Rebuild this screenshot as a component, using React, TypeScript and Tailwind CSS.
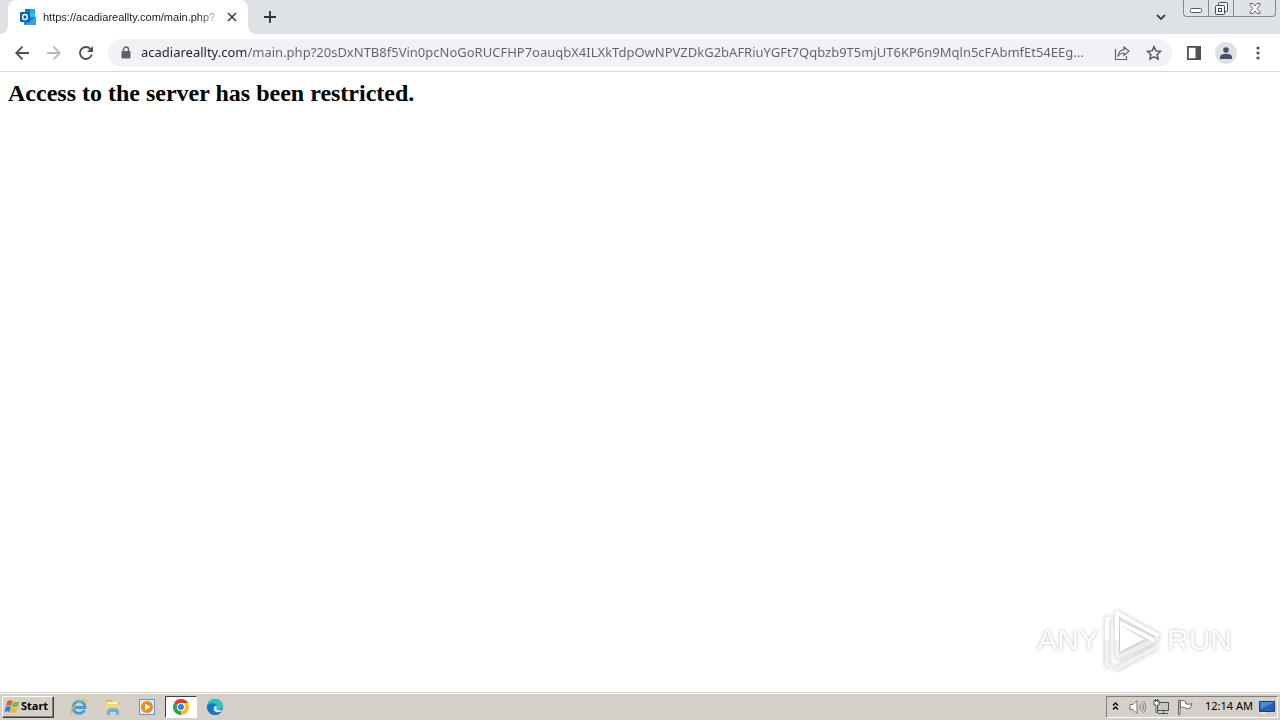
import React, { useState } from 'react';

const PAGE_URL =
  'acadiareallty.com/main.php?20sDxNTB8f5Vin0pcNoGoRUCFHP7oauqbX4ILXkTdpOwNPVZDkG2bAFRiuYGFt7Qqbzb9T5mjUT6KP6n9Mqln5cFAbmfEt54EEg...';

interface IconButtonProps {
  label: string;
  className?: string;
  children: React.ReactNode;
}

const IconButton: React.FC<IconButtonProps> = ({ label, className = '', children }) => (
  <button
    type="button"
    aria-label={label}
    className={`flex shrink-0 items-center justify-center ${className}`}
  >
    {children}
  </button>
);

const OutlookIcon = () => (
  <svg width="16" height="16" viewBox="0 0 16 16" aria-hidden="true">
    <path d="M5 0h10v8H5z" fill="#1490df" />
    <path d="M5 0h5v4H5z" fill="#0f78d4" />
    <path d="M10 0h5v4h-5z" fill="#28a8ea" />
    <path d="M10 4h5v4h-5z" fill="#3cb9ef" />
    <path d="M4 7l12 1v7a1 1 0 0 1-1 1H4z" fill="#1a8ad8" />
    <path d="M16 8v7a1 1 0 0 1-1 1H5z" fill="#28a8ea" />
    <rect x="0" y="3" width="10" height="10" rx="1" fill="#0f5fb4" />
    <ellipse cx="5" cy="8" rx="2.3" ry="2.6" fill="none" stroke="#fff" strokeWidth="1.5" />
  </svg>
);

const LockIcon = () => (
  <svg width="10" height="14" viewBox="0 0 10 14" className="shrink-0" aria-hidden="true">
    <rect x="0.5" y="5" width="9" height="7.5" rx="1" fill="#5f6368" />
    <path d="M2.5 5V3.5a2.5 2.5 0 0 1 5 0V5" fill="none" stroke="#5f6368" strokeWidth="1.4" />
  </svg>
);

const TabStrip = () => (
  <header className="flex h-[34px] shrink-0 bg-[#dee1e6]">
    <div className="w-2 bg-white">
      <div className="h-full rounded-br-lg bg-[#dee1e6]" />
    </div>
    <div className="flex w-60 items-center rounded-t-lg bg-white pl-3 pr-1.5">
      <OutlookIcon />
      <span className="ml-[7px] whitespace-nowrap font-['Liberation_Sans',sans-serif] text-[11px] text-[#202124] [mask-image:linear-gradient(90deg,#000_90%,#00000050)]">
        https://acadiareallty.com/main.php?
      </span>
      <IconButton label="Close tab" className="ml-auto size-5">
        <svg width="10" height="10" viewBox="0 0 10 10" stroke="#3c4043" strokeWidth="1.6">
          <path d="M1 1l8 8M9 1l-8 8" />
        </svg>
      </IconButton>
    </div>
    <div className="w-2 bg-white">
      <div className="h-full rounded-bl-lg bg-[#dee1e6]" />
    </div>
    <IconButton label="New tab" className="w-7">
      <svg width="12" height="12" viewBox="0 0 12 12" stroke="#303236" strokeWidth="1.8">
        <path d="M6 0v12M0 6h12" />
      </svg>
    </IconButton>
    <IconButton label="Search tabs" className="ml-auto w-6">
      <svg width="10" height="7" viewBox="0 0 10 7" fill="none" stroke="#3c4043" strokeWidth="1.8">
        <path d="M1 1l4 4 4-4" />
      </svg>
    </IconButton>
    <div className="ml-2.5 mr-1 flex h-[17px] rounded-b border border-t-0 border-[#85888d] bg-[#dfe2e7]">
      <IconButton label="Minimize" className="w-[25px] border-r border-[#85888d] pt-1">
        <svg width="12" height="5" viewBox="0 0 12 5" fill="#fff" stroke="#55585e">
          <rect x="0.5" y="0.5" width="11" height="4" rx="1" />
        </svg>
      </IconButton>
      <IconButton label="Restore" className="w-[25px] border-r border-[#85888d]">
        <svg width="13" height="13" viewBox="0 0 13 13" fill="#f4f5f7" stroke="#45484e">
          <rect x="3.5" y="0.5" width="9" height="9" rx="1" />
          <rect x="0.5" y="3.5" width="9" height="9" rx="1" />
          <rect x="3.5" y="6.5" width="3" height="3" />
        </svg>
      </IconButton>
      <IconButton label="Close window" className="w-[41px]">
        <svg width="12" height="11" viewBox="0 0 12 11" fill="#fff" stroke="#65686e">
          <path d="M1 .5h3l2 2.5L8 .5h3V2L8 5.500l3 3.500v1.500H8L6 8l-2 2.500H1V9l3-3.500L1 2z" />
        </svg>
      </IconButton>
    </div>
  </header>
);

const Toolbar = () => {
  const [url, setUrl] = useState(PAGE_URL);

  return (
    <nav className="flex h-[38px] shrink-0 items-center border-b border-[#d9dbde] bg-white px-2">
      <IconButton label="Back" className="size-7">
        <svg width="14" height="14" viewBox="0 0 14 14" fill="none" stroke="#4f5256" strokeWidth="1.8">
          <path d="M14 7H1M7.500 .7L1.200 7l6.300 6.300" />
        </svg>
      </IconButton>
      <IconButton label="Forward" className="ml-1 size-7">
        <svg width="14" height="14" viewBox="0 0 14 14" fill="none" stroke="#b8babd" strokeWidth="1.8">
          <path d="M0 7h13M6.500 .7L12.800 7l-6.300 6.300" />
        </svg>
      </IconButton>
      <IconButton label="Reload" className="ml-1 size-7">
        <svg width="14" height="14" viewBox="0 0 14 14" fill="none" stroke="#4f5256" strokeWidth="1.9">
          <path d="M11.500 3A6 6 0 1 0 12.800 8.600" />
          <path d="M14 0v6H8z" fill="#4f5256" stroke="none" />
        </svg>
      </IconButton>
      <div className="ml-2 flex h-7 min-w-0 flex-1 items-center rounded-full bg-[#f0f2f5] pl-[13px] pr-1">
        <LockIcon />
        <input
          type="text"
          aria-label="Address"
          spellCheck={false}
          value={url}
          onChange={(e) => setUrl(e.target.value)}
          className="ml-2.5 min-w-0 flex-1 bg-[linear-gradient(90deg,#202124_105px,#5f6368_105px)] bg-clip-text text-[13px] text-transparent caret-black outline-none"
        />
        <IconButton label="Share this page" className="size-7">
          <svg width="16" height="16" viewBox="0 0 16 16" fill="none" stroke="#5f6368" strokeWidth="1.2">
            <path d="M1.500 4v10.500h11V11" />
            <path d="M10 2l5 4.300-5 4.200V8C7.500 8 5.500 9 4 11.500 4.300 7.500 6.500 5 10 4.600z" />
          </svg>
        </IconButton>
        <IconButton label="Bookmark this tab" className="ml-1 size-7">
          <svg width="16" height="16" viewBox="0 0 16 16" fill="none" stroke="#4f5256" strokeWidth="1.4">
            <path d="M8 1.600l1.900 4.300 4.700.5-3.500 3.100 1 4.600L8 11.700l-4.100 2.400 1-4.600-3.500-3.100 4.700-.5z" />
          </svg>
        </IconButton>
      </div>
      <IconButton label="Side panel" className="ml-2 size-7">
        <svg width="14" height="14" viewBox="0 0 14 14">
          <rect x="0.9" y="0.9" width="12.2" height="12.2" fill="none" stroke="#4f5256" strokeWidth="1.8" />
          <path d="M8.500 0H14v14H8.500z" fill="#4f5256" />
        </svg>
      </IconButton>
      <IconButton label="Profile" className="ml-[7px] size-[22px] rounded-full bg-[#dee1e6]">
        <svg width="12" height="12" viewBox="0 0 12 12" fill="#47536e">
          <circle cx="6" cy="3" r="2.8" />
          <path d="M0 12V10c0-2 3-3.200 6-3.200s6 1.200 6 3.200v2z" />
        </svg>
      </IconButton>
      <IconButton label="Menu" className="ml-[7px] size-7">
        <svg width="4" height="14" viewBox="0 0 4 14" fill="#4f5256">
          <circle cx="2" cy="2" r="1.6" />
          <circle cx="2" cy="7" r="1.6" />
          <circle cx="2" cy="12" r="1.6" />
        </svg>
      </IconButton>
    </nav>
  );
};

const Watermark = () => (
  <div className="absolute bottom-5 right-12 flex items-center gap-1 font-['Liberation_Sans',sans-serif] text-3xl leading-none text-white [text-shadow:0_0_3px_#b4b4b4]">
    <span>ANY</span>
    <svg
      width="60"
      height="64"
      viewBox="0 0 60 64"
      fill="none"
      strokeLinejoin="round"
      className="drop-shadow-[0_0_2px_#bbbbbb]"
      aria-hidden="true"
    >
      <path d="M17 17v27l24-13z" fill="#fff" />
      <path d="M14 50L56 30" stroke="#ededed" strokeWidth="5" />
      <path d="M14 32v18" stroke="#f2f2f2" strokeWidth="4" />
      <path d="M14 32V5l42 23M17 15l34 17" stroke="#fff" strokeWidth="4" />
      <path d="M4 32v25l5 2M13 61l41-22" stroke="#f1f1f1" strokeWidth="4" />
      <path d="M8 11H4v21" stroke="#fff" strokeWidth="4" />
    </svg>
    <span>RUN</span>
  </div>
);

const StartFlag = () => (
  <svg width="17" height="16" viewBox="0 0 17 16" aria-hidden="true">
    <path d="M3.500 2c2-1.200 3.500-1 5 .1L7.200 7C5.700 6 4 6 2 7z" fill="#e8582b" />
    <path d="M9.300 2.600c1.800 1 3.800.8 6.200-.3L14 7.300c-2 1-4 1.100-6 .2z" fill="#7cb83d" />
    <path d="M1.800 8c2-1 3.600-1 5.200 0l-1.500 5c-1.500-1-3.200-1-5 0z" fill="#2f7fd4" />
    <path d="M7.700 8.500c2 1 4 .8 6-.2l-1.500 5c-2 1-4 1.100-6 .1z" fill="#f5b91e" />
  </svg>
);

const ExplorerIcon = () => (
  <svg width="18" height="18" viewBox="0 0 18 18" fill="none">
    <path d="M14.500 12A6 6 0 1 1 15 8.500v1H5" stroke="#38a3e4" strokeWidth="2.8" />
    <path d="M1.500 16C-.5 13 6 4 13 2c3-1 4 .5 3 3" stroke="#e6b72d" strokeWidth="1.3" />
  </svg>
);

const FolderIcon = () => (
  <svg width="16" height="16" viewBox="0 0 16 16">
    <path d="M1 1h6l1 2h7v9H1z" fill="#dfb95a" />
    <path d="M2 3h11v7H2z" fill="#fff5c4" />
    <path d="M1 5h14v8H1z" fill="#f2d67c" />
    <path d="M2 16v-4c0-4 12-4 12 0v4h-3v-3H5v3z" fill="#65b5dd" />
  </svg>
);

const MediaPlayerIcon = () => (
  <svg width="16" height="16" viewBox="0 0 16 16">
    <rect x="0.5" y="0.5" width="15" height="15" fill="#dcecf8" stroke="#5a9ed1" />
    <circle cx="8" cy="8" r="6" fill="#f18a16" />
    <path d="M6 4.500L11.500 8 6 11.500z" fill="#fff" />
  </svg>
);

const ChromeIcon = () => (
  <svg width="16" height="16" viewBox="0 0 16 16">
    <path d="M8 8L1.070 4A8 8 0 0 1 14.930 4z" fill="#e33b2e" />
    <path d="M8 8L14.930 4A8 8 0 0 1 8 16z" fill="#fbc116" />
    <path d="M8 8v8A8 8 0 0 1 1.070 4z" fill="#2da44e" />
    <path d="M8 4h6.930L11.500 10z" fill="#fbc116" />
    <path d="M8 4h6.930L13 2H6z" fill="#e33b2e" />
    <circle cx="8" cy="8" r="4" fill="#fff" />
    <circle cx="8" cy="8" r="3" fill="#3b7ded" />
  </svg>
);

const EdgeIcon = () => (
  <svg width="16" height="16" viewBox="0 0 16 16">
    <circle cx="8" cy="8" r="8" fill="#1269b8" />
    <path d="M0 7.500C.5 3 4 0 8 0c5 0 8 3.500 8 7 0 2.500-2 4-4.500 4-2 0-3-1-2-2C10.500 7 9 5 6 5 3 5 1 6 0 7.500z" fill="#35c1b3" />
    <path d="M0 7.500C1 3.500 9 3 9.700 7 7 6 5.500 9 7 11.500c1.500 2.500 5 2.500 7.500 1C12 16 8 17 4.500 15.200 1.500 13.700 0 11 0 7.500z" fill="#1478c8" />
    <path d="M9.500 9c1-1.500-.5-2.500-1.500-2-1.500 1-1.700 3-.8 4.500 1.300 2 4.300 2.300 7.300.8l.5-1.300c-2 .8-6.500.3-5.500-2z" fill="#e5f1f6" />
  </svg>
);

const Taskbar = () => (
  <footer className="flex h-7 shrink-0 items-center border-t border-[#d4d0c8] bg-[#d4d0c8] shadow-[inset_0_1px_0_#ffffff]">
    <button
      type="button"
      className="ml-0.5 flex h-[22px] w-[52px] items-center border border-b-[#404040] border-l-white border-r-[#404040] border-t-white pl-px text-[11px] font-bold text-black shadow-[inset_-1px_-1px_0_#808080]"
    >
      <StartFlag />
      Start
    </button>
    <div className="ml-[9px] flex h-[22px] gap-0.5">
      <IconButton label="Internet Explorer" className="w-8">
        <ExplorerIcon />
      </IconButton>
      <IconButton label="File Explorer" className="w-8">
        <FolderIcon />
      </IconButton>
      <IconButton label="Media Player" className="w-8">
        <MediaPlayerIcon />
      </IconButton>
      <IconButton
        label="Chrome"
        className="w-8 border border-b-white border-l-[#404040] border-r-white border-t-[#404040] bg-white"
      >
        <ChromeIcon />
      </IconButton>
      <IconButton label="Edge" className="w-8">
        <EdgeIcon />
      </IconButton>
    </div>
    <div className="ml-auto mr-0.5 flex h-[22px] items-center border border-b-white border-l-[#808080] border-r-white border-t-[#808080] pl-1">
      <IconButton label="Show hidden icons" className="w-2">
        <svg width="7" height="9" viewBox="0 0 7 9" fill="none" stroke="#000" strokeWidth="1.3">
          <path d="M1 3.500L3.500 1 6 3.500M1 7.500L3.500 5 6 7.500" />
        </svg>
      </IconButton>
      <IconButton label="Volume" className="ml-2 w-5">
        <svg width="17" height="16" viewBox="0 0 17 16" fill="#fff" stroke="#75777a">
          <path d="M1 5.500h3L8 1.500v13l-4-4H1z" />
          <path d="M10.500 5.500c1.300 1.500 1.300 3.500 0 5M12.500 3.500c2.500 2.500 2.500 6.500 0 9M14.500 2c3 3.500 3 8.500 0 12" fill="none" />
        </svg>
      </IconButton>
      <IconButton label="Network" className="ml-1 w-5">
        <svg width="16" height="16" viewBox="0 0 16 16" fill="#fff" stroke="#505256">
          <rect x="4.500" y="3.500" width="11" height="8" fill="#c3c5c6" />
          <path d="M5 14.500h10M10.500 12v2" />
          <path d="M1 1.500h5V6H4.500v7.500H3V6H1zM2.500 0v3M4.500 0v3" />
        </svg>
      </IconButton>
      <IconButton label="Action Center" className="ml-1 w-5">
        <svg width="16" height="16" viewBox="0 0 16 16" fill="#fff" stroke="#65676a">
          <path d="M1.500 1v14.500H3V1z" />
          <path d="M3.500 2c2-1 3.500-.5 5 .5v2c2 1 4 1 6.500 0l-2 4.500c-2 1-4 .5-5.500-.5-1.500-.5-2.500-.5-4 .5z" />
        </svg>
      </IconButton>
      <time className="ml-2.5 whitespace-nowrap text-[11px] text-black">12:14 AM</time>
      <IconButton label="Show desktop" className="ml-1 w-5">
        <svg width="16" height="14" viewBox="0 0 16 14">
          <path d="M.5 1.500h15v10H.5z" fill="#2364b8" stroke="#173e72" />
          <path d="M1 2h14L2 9z" fill="#4d8cd0" />
          <path d="M2 13h5" stroke="#fff" />
        </svg>
      </IconButton>
    </div>
  </footer>
);

export default function App() {
  return (
    <div className="flex min-h-screen flex-col bg-white font-['Tahoma','Noto_Sans',sans-serif]">
      <TabStrip />
      <Toolbar />
      <main className="relative flex-1 p-2">
        <h1 className="font-['Liberation_Serif',serif] text-2xl leading-[26px] font-bold text-black">
          Access to the server has been restricted.
        </h1>
        <Watermark />
      </main>
      <Taskbar />
    </div>
  );
}
